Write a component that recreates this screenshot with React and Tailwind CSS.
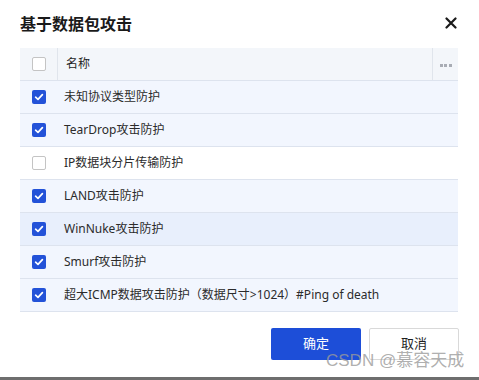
import React from 'react';

const rows = [
  { name: '未知协议类型防护', checked: true, bg: 'bg-[#f2f6fe]' },
  { name: 'TearDrop攻击防护', checked: true, bg: 'bg-[#f2f6fe]' },
  { name: 'IP数据块分片传输防护', checked: false, bg: 'bg-white' },
  { name: 'LAND攻击防护', checked: true, bg: 'bg-[#f2f6fe]' },
  { name: 'WinNuke攻击防护', checked: true, bg: 'bg-[#e8effc]' },
  { name: 'Smurf攻击防护', checked: true, bg: 'bg-[#f2f6fe]' },
  { name: '超大ICMP数据攻击防护（数据尺寸>1024）#Ping of death', checked: true, bg: 'bg-[#f2f6fe]' },
];

function Checkbox({ checked }) {
  if (checked) {
    return (
      <span className="flex h-[14px] w-[14px] items-center justify-center rounded-[2px] bg-[#2352d8]">
        <svg width="10" height="10" viewBox="0 0 10 10" fill="none">
          <path d="M1.6 5.2 L4 7.4 L8.4 2.6" stroke="white" strokeWidth="1.7" strokeLinecap="round" strokeLinejoin="round" />
        </svg>
      </span>
    );
  }
  return <span className="block h-[14px] w-[14px] rounded-[2px] border border-[#c4c4c4] bg-white"></span>;
}

export default function App() {
  return (
    <div
      className="relative flex h-[380px] w-[479px] flex-col bg-white"
      style={{ fontFamily: '"Noto Sans", "Noto Sans CJK SC", sans-serif' }}
    >
      <div className="h-[377px] w-[477px] rounded-br-[4px] bg-white pl-[20px] pr-[19px]">
        <div className="flex h-[48px] items-center justify-between pb-[2px]">
          <h1
            className="text-[16px] font-bold leading-[24px] text-[#1a1a1a]"
            style={{ fontFamily: '"Noto Sans CJK SC", sans-serif' }}
          >
            基于数据包攻击
          </h1>
          <svg className="mr-[1px]" width="12" height="12" viewBox="0 0 12 12">
            <path d="M1.5 1.5 L10.5 10.5 M10.5 1.5 L1.5 10.5" stroke="#1a1a1a" strokeWidth="2.2" strokeLinecap="round" />
          </svg>
        </div>

        <div className="w-[438px] text-[12px] text-[#2b2b2b]">
          <div className="flex h-[33px] items-center border-b border-[#dde3ee] bg-[#f3f6fa]">
            <div className="flex h-full w-[38px] items-center border-r border-[#e0e5ec] pl-[12px]">
              <Checkbox checked={false} />
            </div>
            <div className="flex h-full flex-1 items-center border-r border-[#e0e5ec] pl-[8px] text-[12px] text-[#1f1f1f]">名称</div>
            <div className="flex h-full w-[25px] items-center justify-center gap-[1.5px] pt-[2px]">
              <span className="h-[3px] w-[3px] bg-[#a8acb4]"></span>
              <span className="h-[3px] w-[3px] bg-[#a8acb4]"></span>
              <span className="h-[3px] w-[3px] bg-[#a8acb4]"></span>
            </div>
          </div>
          {rows.map((row) => (
            <div key={row.name} className={`flex h-[33px] items-center border-b border-[#dde3ee] ${row.bg}`}>
              <div className="flex w-[38px] items-center pl-[12px]">
                <Checkbox checked={row.checked} />
              </div>
              <div className="pl-[6px] leading-[16px]">{row.name}</div>
            </div>
          ))}
        </div>

        <div className="mr-[-1px] mt-[16px] flex justify-end gap-[8px]">
          <button className="h-[32px] w-[90px] rounded-[2px] bg-[#1d4ed8] text-[13px] text-white">确定</button>
          <button className="h-[32px] w-[90px] rounded-[2px] border border-[#d9d9d9] bg-white text-[13px] text-[#1f1f1f]">取消</button>
        </div>
      </div>
      <div className="h-[3px] w-full bg-[#6e6e6e]"></div>

      <div
        className="pointer-events-none absolute left-[326px] top-[350px] text-[17px] leading-[22px] text-[#9a9a9a]/80"
        style={{ fontFamily: '"Liberation Sans", "Noto Sans CJK SC", sans-serif' }}
      >
        CSDN @慕容天成
      </div>
    </div>
  );
}
